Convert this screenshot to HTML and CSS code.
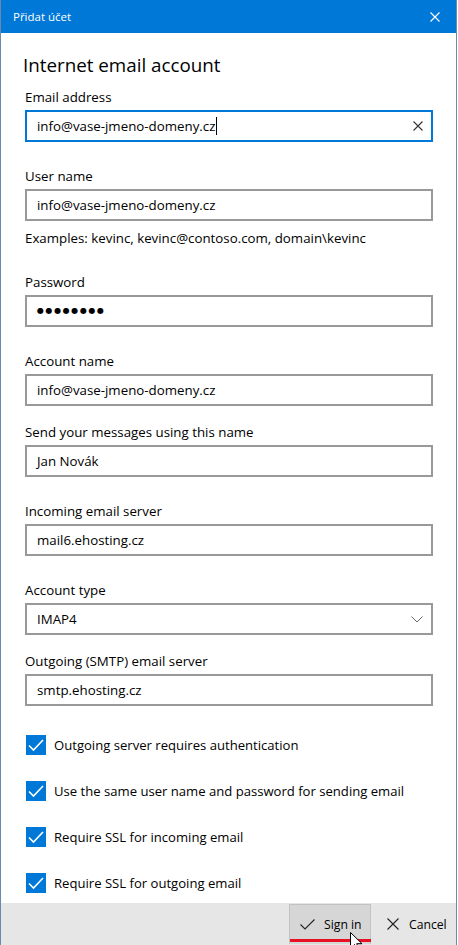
FILE: index.html
```html
<!DOCTYPE html>
<html lang="cs">
<head>
<meta charset="utf-8">
<title>Přidat účet</title>
<link rel="stylesheet" href="styles.css">
</head>
<body>
<div class="window">
  <div class="titlebar">
    <span class="title">Přidat účet</span>
    <svg class="close" width="10" height="10" viewBox="0 0 10 10"><path d="M0.5 0.5 L9.5 9.5 M9.5 0.5 L0.5 9.5" stroke="#fff" stroke-width="1.1" fill="none"/></svg>
  </div>
  <div class="content">
    <h1 class="heading">Internet email account</h1>

    <div class="field">
      <div class="label">Email address</div>
      <div class="input focused">
        <span class="value">info@vase-jmeno-domeny.cz</span><span class="caret"></span>
        <svg class="clear" width="10" height="10" viewBox="0 0 10 10"><path d="M0.5 0.5 L9.5 9.5 M9.5 0.5 L0.5 9.5" stroke="#333" stroke-width="1.1" fill="none"/></svg>
      </div>
    </div>

    <div class="field">
      <div class="label">User name</div>
      <div class="input"><span class="value">info@vase-jmeno-domeny.cz</span></div>
      <div class="hint">Examples: kevinc, kevinc@contoso.com, domain\kevinc</div>
    </div>

    <div class="field">
      <div class="label">Password</div>
      <div class="input"><span class="dots">●●●●●●●●</span></div>
    </div>

    <div class="field">
      <div class="label">Account name</div>
      <div class="input"><span class="value">info@vase-jmeno-domeny.cz</span></div>
    </div>

    <div class="field tight">
      <div class="label">Send your messages using this name</div>
      <div class="input"><span class="value">Jan Novák</span></div>
    </div>

    <div class="field">
      <div class="label">Incoming email server</div>
      <div class="input"><span class="value">mail6.ehosting.cz</span></div>
    </div>

    <div class="field">
      <div class="label">Account type</div>
      <div class="input">
        <span class="value">IMAP4</span>
        <svg class="chevron" width="12" height="7" viewBox="0 0 12 7"><path d="M0.5 0.5 L6 6 L11.5 0.5" stroke="#666" stroke-width="1" fill="none"/></svg>
      </div>
    </div>

    <div class="field tight">
      <div class="label">Outgoing (SMTP) email server</div>
      <div class="input"><span class="value">smtp.ehosting.cz</span></div>
    </div>

    <div class="checks">
      <div class="check-row">
        <span class="box"><svg width="20" height="20" viewBox="0 0 20 20"><path d="M3 10.5 L7.5 15 L17 5" stroke="#fff" stroke-width="1.6" fill="none"/></svg></span>
        <span class="check-text">Outgoing server requires authentication</span>
      </div>
      <div class="check-row">
        <span class="box"><svg width="20" height="20" viewBox="0 0 20 20"><path d="M3 10.5 L7.5 15 L17 5" stroke="#fff" stroke-width="1.6" fill="none"/></svg></span>
        <span class="check-text">Use the same user name and password for sending email</span>
      </div>
      <div class="check-row">
        <span class="box"><svg width="20" height="20" viewBox="0 0 20 20"><path d="M3 10.5 L7.5 15 L17 5" stroke="#fff" stroke-width="1.6" fill="none"/></svg></span>
        <span class="check-text">Require SSL for incoming email</span>
      </div>
      <div class="check-row">
        <span class="box"><svg width="20" height="20" viewBox="0 0 20 20"><path d="M3 10.5 L7.5 15 L17 5" stroke="#fff" stroke-width="1.6" fill="none"/></svg></span>
        <span class="check-text">Require SSL for outgoing email</span>
      </div>
    </div>
  </div>

  <div class="footer">
    <div class="btn signin">
      <svg width="15" height="11" viewBox="0 0 15 11"><path d="M0.5 5.5 L5 10 L14.5 0.5" stroke="#222" stroke-width="1.1" fill="none"/></svg>
      <span>Sign in</span>
      <span class="redline"></span>
    </div>
    <div class="btn cancel">
      <svg width="12" height="12" viewBox="0 0 12 12"><path d="M0.5 0.5 L11.5 11.5 M11.5 0.5 L0.5 11.5" stroke="#222" stroke-width="1.1" fill="none"/></svg>
      <span>Cancel</span>
    </div>
    <svg class="cursor" width="13" height="20" viewBox="0 0 13 20"><path d="M0.5 0.5 L0.5 16.5 L4.5 12.5 L7.5 19 L9.5 18 L6.7 11.7 L12 11.7 Z" fill="#fff" stroke="#000" stroke-width="1"/></svg>
  </div>
</div>
</body>
</html>
```

FILE: styles.css
```css
* { box-sizing: border-box; }

html, body {
  margin: 0;
  padding: 0;
  background: #fff;
}

body {
  font-family: "Open Sans", "Noto Sans", sans-serif;
  font-size: 13.3px;
  color: #000;
}

.window {
  width: 457px;
  height: 945px;
  border-left: 1px solid #6c88aa;
  border-right: 1px solid #6c88aa;
  display: flex;
  flex-direction: column;
  position: relative;
  overflow: hidden;
}

.titlebar {
  height: 33px;
  margin: 0 -1px;
  background: #0078d7;
  color: #fff;
  display: flex;
  align-items: center;
  justify-content: space-between;
  padding: 0 17px 0 13px;
  flex: none;
}

.title {
  font-size: 11.5px;
}

.close { display: block; }

.content {
  flex: 1;
  padding: 18px 0 0 24px;
}

.heading {
  font-size: 18.8px;
  font-weight: 400;
  line-height: 28px;
  margin: 0 0 7px -2px;
}

.field { margin-top: 23px; }
.heading + .field { margin-top: 0; }
.field.tight { margin-top: 15px; }

.label {
  line-height: 20px;
  margin-bottom: 4px;
  padding-top: 1px;
  height: 20px;
}

.input {
  width: 408px;
  height: 32px;
  border: 2px solid #999;
  padding: 0 8px 0 10px;
  display: flex;
  align-items: center;
  line-height: 20px;
}

.input.focused { border-color: #0078d7; }

.caret {
  display: inline-block;
  width: 1px;
  height: 18px;
  background: #000;
  margin-left: 1px;
}

.clear, .chevron {
  margin-left: auto;
  display: block;
}

.dots {
  font-family: "DejaVu Sans", sans-serif;
  font-size: 8px;
  letter-spacing: 1.6px;
}

.hint {
  margin-top: 7px;
  line-height: 20px;
}

.checks {
  margin-top: 29px;
  display: flex;
  flex-direction: column;
  gap: 26px;
}

.check-row {
  display: flex;
  align-items: center;
  height: 20px;
  gap: 8px;
  margin-left: 1px;
  font-size: 13.1px;
}

.box {
  width: 20px;
  height: 20px;
  background: #0078d7;
  display: block;
  flex: none;
}

.box svg { display: block; }

.footer {
  flex: none;
  height: 42px;
  background: #e6e6e6;
  margin: 0 -1px;
  border-left: 1px solid #6c88aa;
  border-right: 1px solid #6c88aa;
  display: flex;
  justify-content: flex-end;
  align-items: stretch;
  padding: 1px 6px 0 0;
  position: relative;
  font-size: 12.2px;
}

.btn {
  display: flex;
  align-items: center;
  gap: 9px;
  height: 40px;
  position: relative;
}

.btn svg { display: block; }

.signin {
  width: 82px;
  background: #d6d6d6;
  border: 1px solid #c2c2c2;
  border-bottom: none;
  padding-left: 10px;
  margin-right: 4px;
}

.cancel {
  width: 75px;
  padding-left: 12px;
  gap: 10px;
}

.redline {
  position: absolute;
  left: 0;
  right: -1px;
  bottom: 2px;
  height: 3px;
  background: #e81123;
}

.cursor {
  position: absolute;
  left: 349px;
  top: 29px;
}
```
